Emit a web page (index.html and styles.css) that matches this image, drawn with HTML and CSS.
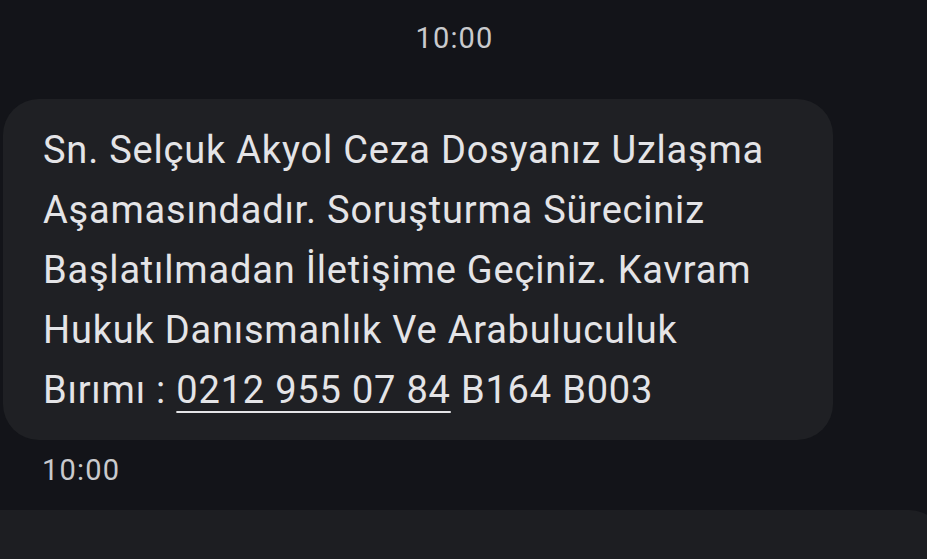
FILE: index.html
```html
<!DOCTYPE html>
<html lang="tr">
<head>
    <meta charset="UTF-8">
    <meta name="viewport" content="width=device-width, initial-scale=1.0">
    <title>Mesaj</title>
    <link rel="stylesheet" href="styles.css">
</head>
<body>
    <div class="thread">
        <div class="stamp">10:00</div>
        <div class="bubble">
            <div class="line">Sn. Selçuk Akyol Ceza Dosyanız Uzlaşma</div>
            <div class="line">Aşamasındadır. Soruşturma Süreciniz</div>
            <div class="line">Başlatılmadan İletişime Geçiniz. Kavram</div>
            <div class="line">Hukuk Danısmanlık Ve Arabuluculuk</div>
            <div class="line">Bırımı : <a class="phone" href="#">0212 955 07 84</a> B164 B003</div>
        </div>
        <div class="sent">10:00</div>
        <div class="next-bubble"></div>
    </div>
</body>
</html>
```

FILE: styles.css
```css
body {
    margin: 0;
    padding: 0;
    background: #131419;
    color: #e4e4e7;
    font-family: Roboto, "Noto Sans", sans-serif;
    height: 100vh;
    overflow: hidden;
}

.thread {
    display: flex;
    flex-direction: column;
}

.stamp {
    padding-top: 21px;
    padding-right: 18px;
    font-size: 29px;
    line-height: 34px;
    letter-spacing: 1.2px;
    text-align: center;
    color: #c9cacd;
}

.bubble {
    margin-top: 44px;
    margin-left: 3px;
    width: 790px;
    padding: 21px 0 20px 40px;
    background: #1f2024;
    border-radius: 36px;
    font-size: 38px;
    line-height: 60px;
    letter-spacing: 0.8px;
    white-space: nowrap;
}

.phone {
    color: inherit;
    text-decoration: underline;
    text-decoration-thickness: 2px;
    text-underline-offset: 8px;
}

.sent {
    margin-top: 13px;
    padding-left: 42px;
    font-size: 29px;
    line-height: 34px;
    letter-spacing: 1.2px;
    color: #c9cacd;
}

.next-bubble {
    margin-top: 23px;
    width: 945px;
    height: 49px;
    background: #1d1e22;
    border-top-right-radius: 36px;
}
```
